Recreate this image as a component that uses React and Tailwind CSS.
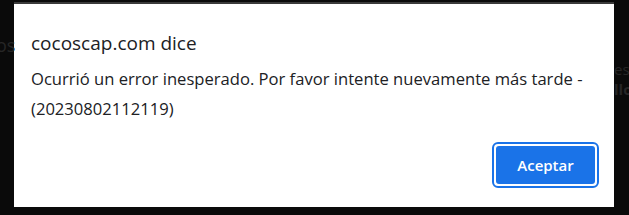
export default function App() {
  return (
    <div
      className="relative h-[215px] w-[629px] overflow-hidden bg-[#0a0a0a] pt-[2px]"
      style={{ fontFamily: '"Open Sans", "Noto Sans", sans-serif' }}
    >
      {/* faint page text behind the overlay */}
      <span className="absolute left-[-4px] top-[32px] text-[18px] text-[#262626]">os</span>
      <span className="absolute left-[614px] top-[58px] text-[15px] text-[#262626]">es</span>
      <span className="absolute left-[614px] top-[78px] text-[15px] font-bold text-[#262626]">llo</span>

      <div className="ml-[14px] flex h-[205px] w-[600px] flex-col border-t-2 border-[#3a3a3a] bg-white px-[17px]">
        <h1 className="mt-[26px] text-[19px] leading-[26px] text-[#202124]">cocoscap.com dice</h1>
        <p className="mt-[8px] text-[16.6px] leading-[30px] text-[#202124]">
          Ocurrió un error inesperado. Por favor intente nuevamente más tarde -
          <br />
          (20230802112119)
        </p>
        <div className="mt-auto mb-[19px] flex justify-end">
          <button className="mr-[-2px] flex h-[46px] w-[107px] items-center justify-center rounded-[6px] border-2 border-[#1a73e8] p-[2px]">
            <span className="flex h-full w-full items-center justify-center rounded-[3px] bg-[#1a73e8] text-[15px] font-semibold text-white">
              Aceptar
            </span>
          </button>
        </div>
      </div>
    </div>
  );
}
